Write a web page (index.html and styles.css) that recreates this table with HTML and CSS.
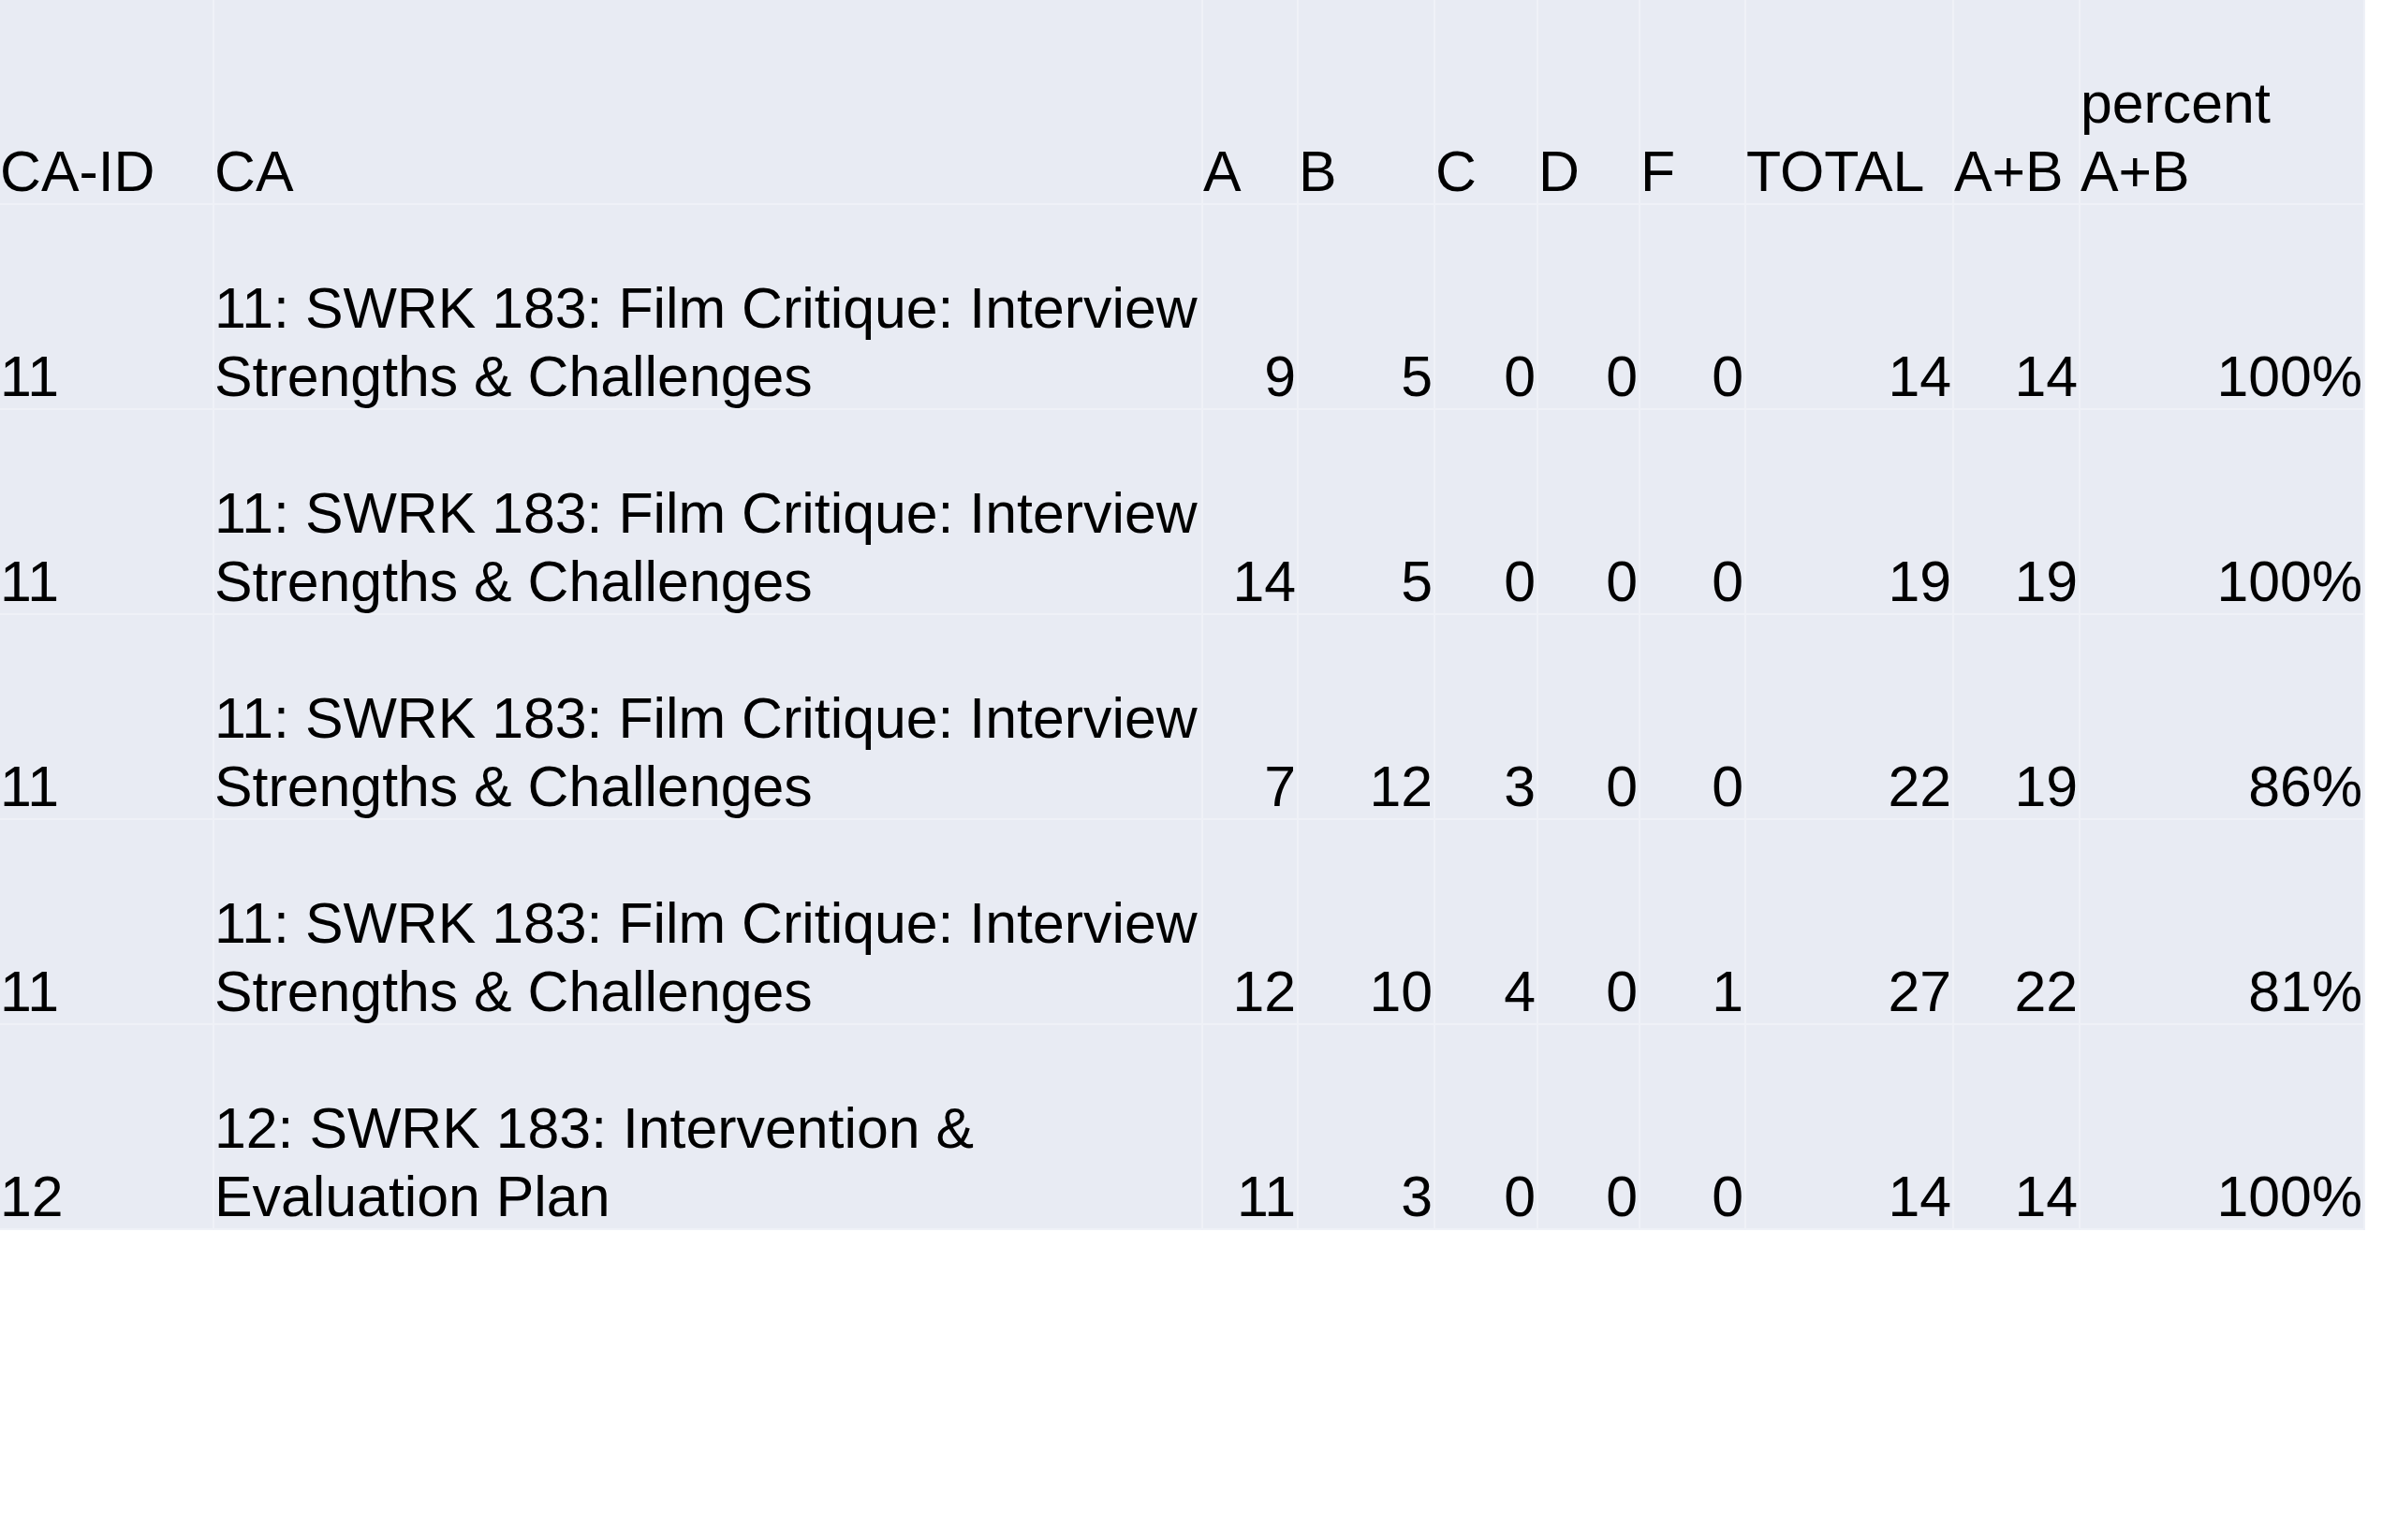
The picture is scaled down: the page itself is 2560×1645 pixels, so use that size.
FILE: index.html
```html
<!DOCTYPE html>
<html>
<head>
<meta charset="utf-8">
<link rel="stylesheet" href="styles.css">
</head>
<body>
<table class="grid">
  <colgroup>
    <col class="c-id">
    <col class="c-ca">
    <col class="c-a">
    <col class="c-b">
    <col class="c-c">
    <col class="c-d">
    <col class="c-f">
    <col class="c-total">
    <col class="c-ab">
    <col class="c-pct">
  </colgroup>
  <tr class="head">
    <td><div class="cell">CA-ID</div></td>
    <td><div class="cell">CA</div></td>
    <td><div class="cell">A</div></td>
    <td><div class="cell">B</div></td>
    <td><div class="cell">C</div></td>
    <td><div class="cell">D</div></td>
    <td><div class="cell">F</div></td>
    <td><div class="cell">TOTAL</div></td>
    <td><div class="cell">A+B</div></td>
    <td><div class="cell">percent A+B</div></td>
  </tr>
  <tr>
    <td><div class="cell">11</div></td>
    <td><div class="cell">11: SWRK 183: Film Critique: Interview Strengths &amp; Challenges</div></td>
    <td class="num"><div class="cell">9</div></td>
    <td class="num"><div class="cell">5</div></td>
    <td class="num"><div class="cell">0</div></td>
    <td class="num"><div class="cell">0</div></td>
    <td class="num"><div class="cell">0</div></td>
    <td class="num"><div class="cell">14</div></td>
    <td class="num"><div class="cell">14</div></td>
    <td class="num"><div class="cell">100%</div></td>
  </tr>
  <tr>
    <td><div class="cell">11</div></td>
    <td><div class="cell">11: SWRK 183: Film Critique: Interview Strengths &amp; Challenges</div></td>
    <td class="num"><div class="cell">14</div></td>
    <td class="num"><div class="cell">5</div></td>
    <td class="num"><div class="cell">0</div></td>
    <td class="num"><div class="cell">0</div></td>
    <td class="num"><div class="cell">0</div></td>
    <td class="num"><div class="cell">19</div></td>
    <td class="num"><div class="cell">19</div></td>
    <td class="num"><div class="cell">100%</div></td>
  </tr>
  <tr>
    <td><div class="cell">11</div></td>
    <td><div class="cell">11: SWRK 183: Film Critique: Interview Strengths &amp; Challenges</div></td>
    <td class="num"><div class="cell">7</div></td>
    <td class="num"><div class="cell">12</div></td>
    <td class="num"><div class="cell">3</div></td>
    <td class="num"><div class="cell">0</div></td>
    <td class="num"><div class="cell">0</div></td>
    <td class="num"><div class="cell">22</div></td>
    <td class="num"><div class="cell">19</div></td>
    <td class="num"><div class="cell">86%</div></td>
  </tr>
  <tr>
    <td><div class="cell">11</div></td>
    <td><div class="cell">11: SWRK 183: Film Critique: Interview Strengths &amp; Challenges</div></td>
    <td class="num"><div class="cell">12</div></td>
    <td class="num"><div class="cell">10</div></td>
    <td class="num"><div class="cell">4</div></td>
    <td class="num"><div class="cell">0</div></td>
    <td class="num"><div class="cell">1</div></td>
    <td class="num"><div class="cell">27</div></td>
    <td class="num"><div class="cell">22</div></td>
    <td class="num"><div class="cell">81%</div></td>
  </tr>
  <tr>
    <td><div class="cell">12</div></td>
    <td><div class="cell">12: SWRK 183: Intervention &amp; Evaluation Plan</div></td>
    <td class="num"><div class="cell">11</div></td>
    <td class="num"><div class="cell">3</div></td>
    <td class="num"><div class="cell">0</div></td>
    <td class="num"><div class="cell">0</div></td>
    <td class="num"><div class="cell">0</div></td>
    <td class="num"><div class="cell">14</div></td>
    <td class="num"><div class="cell">14</div></td>
    <td class="num"><div class="cell">100%</div></td>
  </tr>
</table>
</body>
</html>
```

FILE: styles.css
```css
html, body {
  margin: 0;
  padding: 0;
  background: #ffffff;
}

.grid {
  table-layout: fixed;
  border-collapse: separate;
  border-spacing: 2px;
  margin: -2px 0 0 -2px;
  background: #eff1f7;
  font-family: "Liberation Sans", Arial, Helvetica, sans-serif;
  font-size: 60.8px;
  line-height: 73px;
  color: #000000;
}

.grid td {
  background: #e8ebf3;
  height: 217px;
  padding: 0;
  vertical-align: bottom;
  text-align: left;
  white-space: normal;
}

.grid .cell {
  margin-bottom: -3px;
}

.grid td.num {
  text-align: right;
  padding-right: 1px;
}

.c-id { width: 227px; }
.c-ca { width: 1054px; }
.c-a { width: 100px; }
.c-b { width: 144px; }
.c-c { width: 108px; }
.c-d { width: 107px; }
.c-f { width: 111px; }
.c-total { width: 220px; }
.c-ab { width: 133px; }
.c-pct { width: 302px; }
```
